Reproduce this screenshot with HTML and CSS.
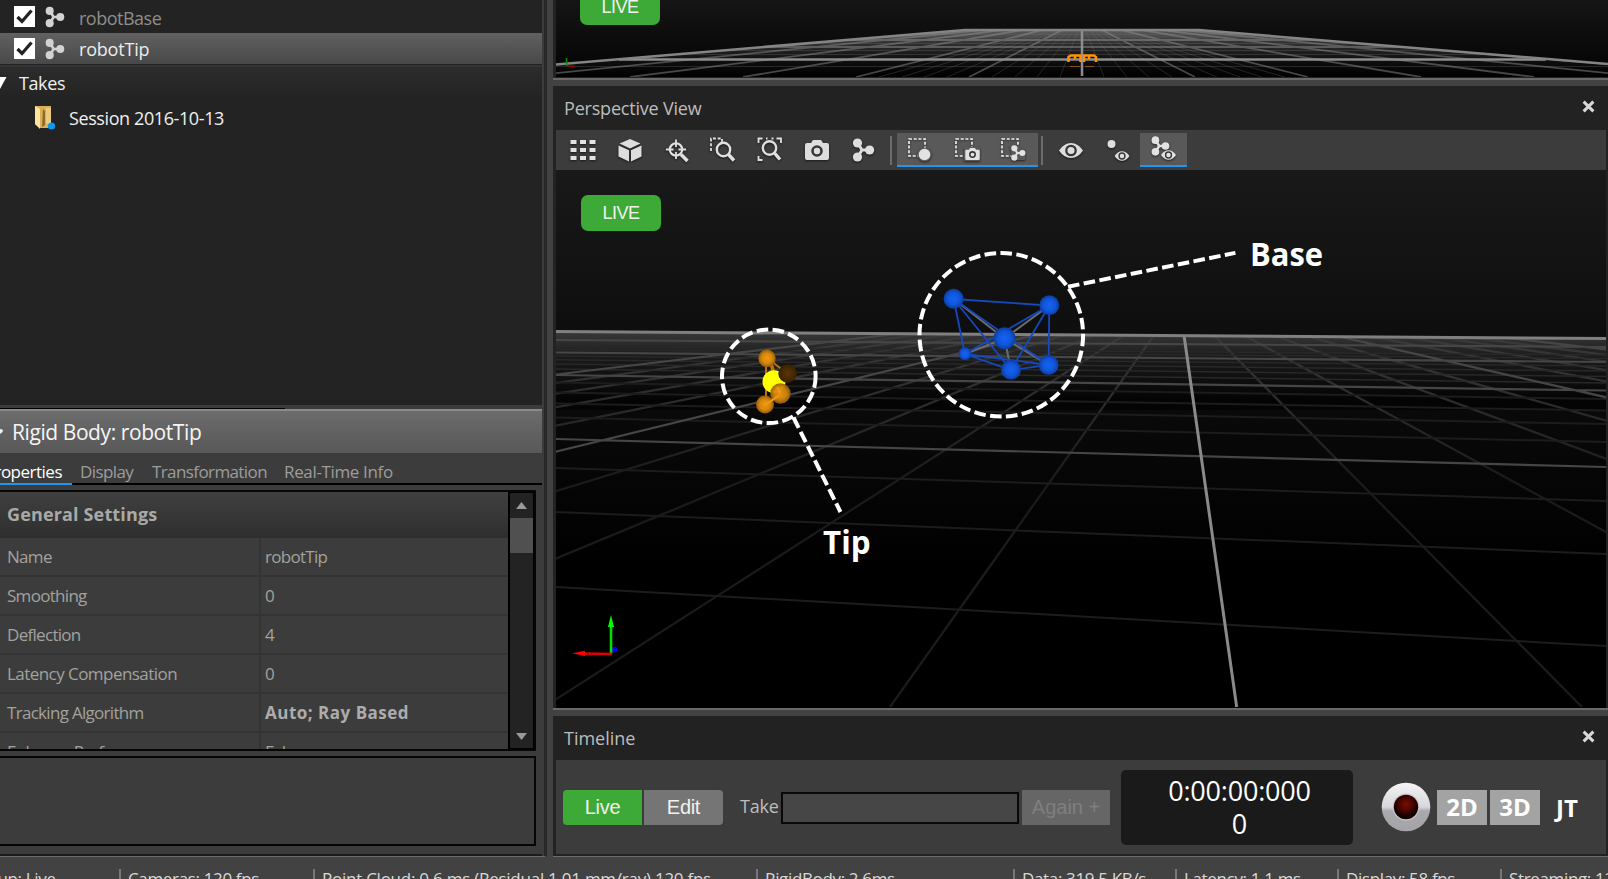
FILE: index.html
```html
<!DOCTYPE html>
<html lang="en">
<head>
<meta charset="utf-8">
<title>Motion Capture</title>
<link rel="stylesheet" href="styles.css">
</head>
<body>
<svg class="defs" width="0" height="0" aria-hidden="true">
  <defs>
    <symbol id="bones" viewBox="0 0 24 24">
      <path d="M7 5.500L11 12M7 18.500L11 12M11 12H18" stroke="currentColor" stroke-width="3" fill="none"/>
      <circle cx="6.500" cy="5" r="4.600" fill="currentColor"/><circle cx="6.500" cy="19" r="4.600" fill="currentColor"/><circle cx="18.600" cy="12" r="4.600" fill="currentColor"/>
    </symbol>
    <symbol id="eye" viewBox="0 0 24 16">
      <path d="M0 8Q5 .5 12 .5T24 8Q19 15.500 12 15.500T0 8Z" fill="currentColor"/>
      <circle cx="12" cy="8" r="4.700" fill="none" stroke="#383838" stroke-width="2.300"/>
    </symbol>
    <symbol id="camera" viewBox="0 0 24 20">
      <path d="M2 3H6L8 0H16L18 3H22Q24 3 24 5V18Q24 20 22 20H2Q0 20 0 18V5Q0 3 2 3Z" fill="currentColor"/>
      <circle cx="12" cy="11" r="4.500" fill="none" stroke="#383838" stroke-width="2.600"/>
    </symbol>
    <symbol id="close" viewBox="0 0 12 12"><path d="M1.500 1.500L10.500 10.500M10.500 1.500L1.500 10.500" stroke="currentColor" stroke-width="2.800" fill="none"/></symbol>
    <symbol id="check" viewBox="0 0 21 21"><path d="M3.500 11L8 15.500L17.500 4.500" stroke="#222" stroke-width="3.200" fill="none"/></symbol>
  </defs>
</svg>

<div class="app">
  <div class="main">
    <aside class="side">
      <section class="assets">
        <div class="asset asset-first"><span class="box"><svg width="21" height="21"><use href="#check"/></svg></span><svg class="bone" width="21" height="22"><use href="#bones"/></svg><span class="asset-name t-base">robotBase</span></div>
        <div class="asset asset-on"><span class="box"><svg width="21" height="21"><use href="#check"/></svg></span><svg class="bone" width="21" height="22"><use href="#bones"/></svg><span class="asset-name t-tip">robotTip</span></div>
        <div class="takes"><svg width="7" height="12"><path d="M0 0H6.500L0 12Z" fill="#fff"/></svg><span class="t-takes">Takes</span></div>
        <div class="session">
          <svg width="21" height="25" viewBox="0 0 21 25"><path d="M0 1H16V19L13 20V23H5L0 19Z" fill="#d9b057"/><path d="M0 1L5 4V24L0 19Z" fill="#ffe39b"/><path d="M8 4L10 6V20L7 22Z" fill="#8c6a2c"/><path d="M11 3H16V18L11 19Z" fill="#edcb7d"/><circle cx="16.500" cy="21" r="3.600" fill="#0a9cf5"/></svg>
          <span class="t-session">Session 2016-10-13</span>
        </div>
      </section>
      <section class="props">
        <i class="rule"></i>
        <h2 class="props-title"><svg width="5" height="8"><path d="M0 1Q4 1 2.500 4L0 6Z" fill="#eee"/></svg><span class="t-rigid">Rigid Body: robotTip</span></h2>
        <nav class="tabs"><span class="tab tab-on"><span class="t-prop">Properties</span></span><span class="tab t-disp">Display</span><span class="tab t-trans">Transformation</span><span class="tab t-real">Real-Time Info</span></nav>
        <div class="grid">
          <div class="grid-rows">
            <h3 class="group"><span class="t-gen">General Settings</span></h3>
            <div class="row"><span class="key">Name</span><span class="val">robotTip</span></div>
            <div class="row"><span class="key">Smoothing</span><span class="val">0</span></div>
            <div class="row"><span class="key">Deflection</span><span class="val">4</span></div>
            <div class="row"><span class="key key-wide">Latency Compensation</span><span class="val">0</span></div>
            <div class="row"><span class="key">Tracking Algorithm</span><span class="val strong">Auto; Ray Based</span></div>
            <div class="row"><span class="key">Enhance Performance</span><span class="val">False</span></div>
          </div>
          <div class="scroll"><svg width="11" height="7"><path d="M0 7L5.500 0L11 7Z" fill="#9a9a9a"/></svg><i class="thumb"></i><svg class="down" width="11" height="7"><path d="M0 0L5.500 7L11 0Z" fill="#9a9a9a"/></svg></div>
        </div>
        <div class="help"></div>
      </section>
    </aside>

    <div class="work">
      <section class="view view-top">
        <svg class="scene" width="1052" height="77" viewBox="556 0 1052 77">
          <defs>
            <linearGradient id="sky1" x1="0" y1="0" x2="0" y2="1"><stop offset="0" stop-color="#151515"/><stop offset=".9" stop-color="#050505"/></linearGradient>
            <linearGradient id="floor1" gradientUnits="userSpaceOnUse" x1="0" y1="30" x2="0" y2="77"><stop offset="0" stop-color="#5c5c5c"/><stop offset=".28" stop-color="#303030"/><stop offset=".6" stop-color="#111"/><stop offset="1" stop-color="#000"/></linearGradient>
            <clipPath id="f1"><path d="M965 30H1199L1608 64.500V77H556V65Z"/></clipPath>
          </defs>
          <rect x="556" width="1052" height="77" fill="url(#sky1)"/>
          <g clip-path="url(#f1)" fill="none">
            <rect x="556" y="30" width="1052" height="47" fill="url(#floor1)"/>
            <path stroke="#777" stroke-opacity=".28" d="M1082 20L1104 77M1082 20L1127 77M1082 20L1149 77M1082 20L1172 77M1082 20L1217 77M1082 20L1240 77M1082 20L1262 77M1082 20L1285 77M1082 20L1060 77M1082 20L1037 77M1082 20L1015 77M1082 20L992 77M1082 20L947 77M1082 20L924 77M1082 20L902 77M1082 20L879 77M556 34.500H1608M556 37H1608M556 43.500H1608M556 50.500H1608M556 54.500H1608M556 66.500H1608"/>
            <path stroke="#999" stroke-opacity=".45" stroke-width="1.800" d="M1082 20L1195 77M1082 20L1308 77M1082 20L1421 77M1082 20L1534 77M1082 20L1647 77M1082 20L1760 77M1082 20L1873 77M1082 20L969 77M1082 20L856 77M1082 20L743 77M1082 20L630 77M1082 20L517 77M1082 20L404 77M1082 20L291 77M556 40H1608M556 47H1608"/>
            <path stroke="#8e8e8e" stroke-width="2.500" d="M619 59.500H1546M1082 30V76"/>
          </g>
          <path d="M556 64.500L965 30H1199L1608 64" stroke="#858585" stroke-width="2.500" fill="none"/>
          <path d="M566.500 58V66" stroke="#0a8a0a" stroke-width="1.500"/><path d="M567 66H575" stroke="#900" stroke-width="1.500"/>
          <path d="M1068.500 62V57L1071 55.500H1080.500V62M1084 62V55.500H1094L1096 57V62M1075 56V59M1089 56V59" stroke="#ff9200" stroke-width="2.500" fill="none"/>
          <path d="M1070 66.500H1080M1085 66.500H1094" stroke="#8a5510" stroke-width="1.200"/>
        </svg>
        <span class="live live-top">LIVE</span>
      </section>

      <section class="view view-main">
        <header class="bar"><span class="t-persp">Perspective View</span><svg width="13" height="13"><use href="#close"/></svg></header>
        <div class="tools">
          <svg class="ico" viewBox="0 0 26 26"><path d="M.5 3h6v4h-6zM10 3h6v4h-6zM19.500 3h6v4h-6zM.5 11h6v4h-6zM10 11h6v4h-6zM19.500 11h6v4h-6zM.5 19h6v4h-6zM10 19h6v4h-6zM19.500 19h6v4h-6z" fill="#e2e2e2"/></svg>
          <svg class="ico" viewBox="0 0 26 26"><path d="M13 2L23.500 6.500L13 11.500L2.500 6.500ZM1.500 8.500L12 13.300V24.500L1.500 19.500ZM24.500 8.500L14 13.300V24.500L24.500 19.500Z" fill="#dedede"/></svg>
          <svg class="ico" viewBox="0 0 26 26" fill="none" stroke="#e0e0e0"><circle cx="12" cy="12.500" r="6.200" stroke-width="2.200"/><path d="M12 2.500V10M12 15V22M2 12.500H9.500M14.500 12.500H22" stroke-width="1.800"/><path d="M17 17.500L23.500 24" stroke-width="3.600"/></svg>
          <svg class="ico" viewBox="0 0 26 26" fill="none" stroke="#e0e0e0"><circle cx="13.500" cy="12.500" r="6.700" stroke-width="2.400"/><path d="M18.500 17.500L24 23.500" stroke-width="3.400"/><path d="M1 14V1.500H12V5" stroke-width="1.800" stroke-dasharray="3 1.800"/></svg>
          <svg class="ico" viewBox="0 0 26 26" fill="none" stroke="#e0e0e0"><circle cx="12.500" cy="11" r="6.700" stroke-width="2.400"/><path d="M17.500 16L23 22.500" stroke-width="3.400"/><path d="M1.500 6V1.500H5.500M19.500 1.500H24V6M1.500 19V23H5.500M9 1.500H10.500M14.500 1.500H16.500" stroke-width="1.800"/></svg>
          <svg class="ico" viewBox="0 0 26 26" color="#dedede"><use href="#camera" x="1" y="3" width="24" height="20"/></svg>
          <svg class="ico" viewBox="0 0 26 26" color="#dedede"><use href="#bones" x="0" y="1" width="24" height="24"/></svg>
          <i class="sep"></i>
          <div class="group-on">
            <svg class="ico" viewBox="0 0 26 26" color="#e2e2e2"><path d="M2 3H18V20H2Z" fill="none" stroke="#eee" stroke-width="1.700" stroke-dasharray="3 1.700"/><circle cx="17.500" cy="18.500" r="7" fill="#595959"/><circle cx="17.500" cy="18.500" r="5.800" fill="currentColor"/></svg>
            <svg class="ico" viewBox="0 0 26 26" color="#e2e2e2"><path d="M2 3H18V20H2Z" fill="none" stroke="#eee" stroke-width="1.700" stroke-dasharray="3 1.700"/><rect x="10" y="11" width="16" height="14" fill="#595959"/><use href="#camera" x="11" y="12" width="15" height="12"/></svg>
            <svg class="ico" viewBox="0 0 26 26" color="#e2e2e2"><path d="M2 3H18V20H2Z" fill="none" stroke="#eee" stroke-width="1.700" stroke-dasharray="3 1.700"/><path d="M10 9H16L25 14V24H12Z" fill="#595959"/><use href="#bones" x="10" y="9" width="16" height="16"/></svg>
          </div>
          <i class="sep"></i>
          <svg class="ico ico-eye" viewBox="0 0 26 26" color="#dedede"><use href="#eye" x="1" y="5" width="24" height="17"/></svg>
          <svg class="ico" viewBox="0 0 26 26" color="#dedede"><circle cx="6.500" cy="7" r="4" fill="currentColor"/><use href="#eye" x="9.500" y="14" width="15" height="10"/></svg>
          <div class="group-on one"><svg class="ico" viewBox="0 0 26 26" color="#e2e2e2"><use href="#bones" x="0" y="0" width="20" height="20"/><use href="#eye" x="11" y="14" width="15" height="10"/></svg></div>
        </div>
        <div class="canvas">
          <svg class="scene" width="1050" height="538" viewBox="556 170 1050 538">
            <defs>
              <linearGradient id="sky2" x1="0" y1="0" x2="0" y2="1"><stop offset="0" stop-color="#191919"/><stop offset=".3" stop-color="#0e0e0e"/><stop offset=".75" stop-color="#000"/></linearGradient>
              <linearGradient id="floor2" gradientUnits="userSpaceOnUse" x1="0" y1="334" x2="0" y2="400"><stop offset="0" stop-color="#363636"/><stop offset=".35" stop-color="#1a1a1a"/><stop offset="1" stop-color="#040404"/></linearGradient>
              <linearGradient id="ray" gradientUnits="userSpaceOnUse" x1="0" y1="335" x2="0" y2="480"><stop offset="0" stop-color="#3a3a3a"/><stop offset="1" stop-color="#1b1b1b"/></linearGradient>
              <clipPath id="f2"><path d="M556 331L1606 338V708H556Z"/></clipPath>
              <radialGradient id="blue"><stop offset="0" stop-color="#1463f5"/><stop offset=".6" stop-color="#1156db"/><stop offset="1" stop-color="#0c3d9c"/></radialGradient>
              <radialGradient id="orange"><stop offset="0" stop-color="#f29a0d"/><stop offset=".6" stop-color="#d4860e"/><stop offset="1" stop-color="#965c06"/></radialGradient>
              <radialGradient id="brown"><stop offset="0" stop-color="#5c3803"/><stop offset="1" stop-color="#382100"/></radialGradient>
            </defs>
            <rect x="556" y="170" width="1050" height="538" fill="url(#sky2)"/>
            <g clip-path="url(#f2)" fill="none">
              <path d="M556 331L1606 338V410H556Z" fill="url(#floor2)"/>
              <path stroke="url(#ray)" stroke-width="2.200" d="M1179 300L1582 707M1179 300L1928 707M1179 300L2274 707M1179 300L2620 707M1179 300L3312 707M1179 300L3658 707M1179 300L4004 707M1179 300L4350 707M1179 300L890 707M1179 300L544 707M1179 300L198 707M1179 300L-148 707M1179 300L-840 707M1179 300L-1186 707M1179 300L-1532 707M1179 300L-1878 707"/>
              <path stroke="#1c1c1c" stroke-width="2" d="M556 587L1606 646M556 512L1606 554M556 468L1606 501M556 417.500L1606 442M556 403.500L1606 424M556 392.500L1606 410.500M556 382.500L1606 399"/>
              <path stroke="#282828" stroke-width="1.500" d="M556 369L1606 383M556 364L1606 376.500M556 359.700L1606 371M556 356L1606 366M556 349.500L1606 358.500M556 346.800L1606 355"/>
              <path stroke="#464646" stroke-width="2.200" d="M556 439L1606 467M556 375L1606 390.500M556 352.500L1606 362M556 340L1606 347M1179 300L2966 707M1179 300L4696 707M1179 300L-494 707M1179 300L-2224 707"/>
              <path stroke="#8a8a8a" stroke-width="3" d="M1179 300L1236.700 707"/>
            </g>
            <path d="M556 331.500L1606 338.500" stroke="#808080" stroke-width="3"/>

            <g stroke="#6c6c6c" stroke-width="2"><path d="M1004.500 338.500L953.600 299M1004.500 338.500L1049.300 305.500M1004.500 338.500L965 354M1004.500 338.500L1011 370M1004.500 338.500L1048.600 365"/></g>
            <path fill="none" stroke="#1549bd" stroke-width="1.800" d="M953.600 299L1049.300 305.500L1048.600 365L1011 370L965 354ZM953.600 299L1011 370L1049.300 305.500L965 354L1048.600 365L953.600 299"/>
            <g fill="url(#blue)"><circle cx="953.600" cy="298.700" r="10"/><circle cx="1049.300" cy="305.300" r="10"/><circle cx="965" cy="353.700" r="6.500"/><circle cx="1048.600" cy="365" r="10"/><circle cx="1011" cy="369.700" r="10"/><circle cx="1004.500" cy="338.300" r="11"/></g>

            <path fill="none" stroke="#b87212" stroke-width="2" d="M766 358V404M769 358L775 382M767 358L788 374M771 360L780 393M765 404L780 393"/>
            <circle cx="767" cy="358.300" r="8.700" fill="url(#orange)"/><circle cx="774" cy="381.700" r="11.500" fill="#ff0"/><circle cx="787.600" cy="373.500" r="9.300" fill="url(#brown)"/><circle cx="765" cy="404.500" r="9" fill="url(#orange)"/><circle cx="780.400" cy="393.500" r="10.200" fill="url(#orange)" fill-opacity=".94"/>
            <path d="M766 404L779 396M780 393L777 387" stroke="#f59b16" stroke-width="1.500"/>

            <g fill="none" stroke="#fff" stroke-width="4" stroke-dasharray="11.600 4.400">
              <circle cx="768.800" cy="376.300" r="46.800"/><circle cx="1001.300" cy="334.800" r="81.800"/>
              <path d="M793.500 417.500L840.500 512M1068 286.700L1235.400 252.900"/>
            </g>
            <text class="label" x="1250" y="265.500" textLength="73" lengthAdjust="spacingAndGlyphs">Base</text>
            <text class="label" x="823" y="554" textLength="47.500" lengthAdjust="spacingAndGlyphs">Tip</text>

            <circle cx="614.500" cy="649.500" r="2.800" fill="#00f"/>
            <path d="M611 654V624" stroke="#00e000" stroke-width="2.600"/><path d="M608 627L611 615L614 627Z" fill="#0f0"/>
            <path d="M612 654L583 653.500" stroke="#e00000" stroke-width="2.400"/><path d="M585 650.800L572 653.300L585 656Z" fill="#f00"/>
          </svg>
          <span class="live live-main">LIVE</span>
        </div>
      </section>

      <section class="timeline">
        <header class="bar"><span class="t-time">Timeline</span><svg width="13" height="13"><use href="#close"/></svg></header>
        <div class="controls">
          <div class="modes"><button class="mode mode-live">Live</button><button class="mode">Edit</button></div>
          <span class="take">Take</span><span class="field"></span><button class="again">Again +</button>
          <div class="clock"><span class="t-clock">0:00:00:000</span><span>0</span></div>
          <svg class="rec" width="50" height="50" viewBox="0 0 50 50">
            <defs><linearGradient id="ring" x1="0" y1="0" x2="0" y2="1"><stop offset="0" stop-color="#f4f4f6"/><stop offset=".5" stop-color="#d8d8dc"/><stop offset=".58" stop-color="#a9a9ae"/><stop offset="1" stop-color="#a3a3a8"/></linearGradient><radialGradient id="dot" cx=".5" cy=".4"><stop offset="0" stop-color="#7c0d02"/><stop offset=".55" stop-color="#4a0500"/><stop offset="1" stop-color="#120000"/></radialGradient></defs>
            <circle cx="25" cy="25" r="24.300" fill="url(#ring)"/><circle cx="25" cy="25" r="13.500" fill="#c9c9cc"/><circle cx="25" cy="25" r="12.200" fill="url(#dot)"/>
          </svg>
          <span class="dim">2D</span><span class="dim">3D</span><span class="jt">JT</span>
        </div>
      </section>
    </div>
  </div>

  <footer class="status">
    <span class="st s0">Group: Live</span><span class="st s1">Cameras: 120 fps</span><span class="st s2">Point Cloud: 0.6 ms (Residual 1.01 mm/ray) 120 fps</span><span class="st s3">RigidBody: 2.6ms</span><span class="st s4">Data: 319.5 KB/s</span><span class="st s5">Latency: 1.1 ms</span><span class="st s6">Display: 58 fps</span><span class="st s7">Streaming: 120</span>
  </footer>
</div>
</body>
</html>
```
FILE: styles.css
```css
* { box-sizing: border-box; }
body { margin: 0; overflow: hidden; background: #424242; font-family: "Open Sans", "Noto Sans", sans-serif; font-size: 17px; color: #bdbdbd; }
h2, h3 { margin: 0; font-weight: 400; }
button { border: 0; padding: 0; font: inherit; }
svg { display: block; flex: none; }
.defs { position: absolute; }
.app { width: 1608px; height: 879px; display: flex; flex-direction: column; overflow: hidden; white-space: nowrap; }
.main { display: flex; height: 857px; gap: 6px; }

.side { width: 547px; background: #3c3c3c; border-right: 3px solid #292929; border-bottom: 1px solid #6d6d6d; display: flex; flex-direction: column; }
.assets { width: 542px; height: 405px; background: #232323; }
.asset { display: flex; align-items: center; height: 33px; padding-left: 14px; color: #8e8e8a; font-size: 18px; }
.box { width: 21px; height: 21px; background: #fff; }
.bone { margin: 0 14px 0 9px; color: #d2d2d2; }
.asset-first .asset-name { padding-top: 2px; }
.asset-on { height: 31px; background: linear-gradient(#616161, #484848); color: #ececec; }
.t-base { letter-spacing: -.5px; }
.t-tip { letter-spacing: -.2px; padding-top: 1px; }
.takes { display: flex; align-items: center; gap: 12px; height: 34px; margin-top: 1px; border-top: 2px solid #353535; background: linear-gradient(#2c2c2c, #232323); color: #f0f0f0; font-size: 18px; }
.t-takes { letter-spacing: -.4px; }
.session { display: flex; align-items: center; gap: 13px; margin-top: 2px; padding: 0 0 0 35px; height: 32px; color: #f0f0f0; font-size: 18px; }
.t-session { letter-spacing: -.4px; padding-top: 2px; }

.props { width: 542px; flex: 1; border-bottom: 2px solid #1c1c1c; }
.rule { display: block; width: 285px; height: 4px; border-bottom: 1px solid #000; }
.props-title { display: flex; align-items: center; gap: 7px; height: 44px; border-top: 2px solid #8a8a8a; background: linear-gradient(#6c6c6c, #585858); color: #f5f5f5; font-size: 21px; }
.t-rigid { letter-spacing: -.42px; }
.tabs { display: flex; height: 32px; border-bottom: 2px solid #000; color: #9c9c9c; }
.tab { height: 32px; line-height: 37px; }
.tab-on { width: 72px; display: flex; justify-content: flex-end; padding-right: 10px; margin-right: 8px; border-bottom: 2px solid #1f97ee; color: #fff; }
.t-prop { letter-spacing: -.5px; }
.t-disp, .t-trans { letter-spacing: -.6px; }
.t-real { letter-spacing: -.35px; }
.t-disp { width: 72px; }
.t-trans { width: 132px; }
.grid { display: flex; width: 536px; height: 261px; margin-top: 5px; border: solid #060606; border-width: 2px 2px 2px 0; overflow: hidden; }
.grid-rows { width: 508px; }
.group { height: 46px; padding-left: 7px; line-height: 44px; background: linear-gradient(#404040, #2e2e2e); font-size: 18px; font-weight: 700; color: #a9aaa8; }
.t-gen { letter-spacing: .15px; }
.row { display: flex; height: 39px; line-height: 38px; border-bottom: 2px solid #343434; color: #a2a29e; letter-spacing: -.7px; }
.key { width: 261px; padding-left: 7px; border-right: 2px solid #343434; }
.key-wide { letter-spacing: -.55px; }
.val { padding-left: 4px; }
.strong { font-weight: 700; letter-spacing: .5px; color: #acacac; }
.scroll { width: 26px; border: solid #000; border-width: 1px 1px 1px 2px; background: #232323; display: flex; flex-direction: column; align-items: center; padding: 9px 0 8px; }
.thumb { width: 23px; height: 35px; margin-top: 9px; background: #505050; }
.down { margin-top: auto; }
.help { width: 536px; height: 90px; margin-top: 5px; border: 2px solid #060606; border-left: 0; }

.work { width: 1055px; display: flex; flex-direction: column; gap: 6px; }
.view { position: relative; }
.view-top { height: 80px; padding-left: 3px; background: #222; border-bottom: 2px solid #6a6a6a; }
.live { position: absolute; width: 80px; height: 36px; border-radius: 7px; background: #3da936; color: #f2f2f2; font: 18px/37px "Liberation Sans", Arial, sans-serif; letter-spacing: -.5px; text-align: center; }
.live-top { left: 27px; top: -11px; }
.live-main { left: 25px; top: 25px; }
.view-main { height: 624px; padding-left: 3px; background: #222; border-bottom: 2px solid #6a6a6a; }
.bar { display: flex; justify-content: space-between; align-items: center; height: 44px; padding: 0 13px 1px 8px; font-size: 18px; color: #bdbdbd; }
.bar svg { color: #d8d8d8; margin-bottom: 2px; }
.t-persp { letter-spacing: -.2px; }
.t-time { letter-spacing: 0; }
.tools { display: flex; align-items: center; width: 1050px; height: 40px; padding-left: 14px; background: #3c3c3c; }
.ico { width: 26px; height: 26px; margin-right: 20.8px; margin-bottom: 1px; flex: none; filter: drop-shadow(0 1px 1px #0009); }
.tools > .ico:nth-child(7) { margin-right: 13px; }
.sep { width: 2px; height: 29px; flex: none; background: #6c6c6c; }
.group-on { display: flex; align-items: center; width: 141px; height: 34px; flex: none; margin: 0 3px 0 5px; padding-left: 10px; border-bottom: 2px solid #1f97ee; background: #595959; }
.ico-eye { margin-left: 15px; }
.one { width: 47px; margin-left: -11px; }
.canvas { position: relative; width: 1050px; height: 538px; }
.label { fill: #fff; font: 700 33px "Open Sans", sans-serif; }

.timeline { height: 141px; padding-left: 3px; background: #222; border-bottom: 1px solid #6d6d6d; }
.controls { display: flex; align-items: center; width: 1050px; height: 94px; padding-left: 7px; background: #3c3c3c; }
.modes { display: flex; gap: 2px; margin-right: 17px; }
.mode { width: 79px; height: 35px; background: #757575; color: #f2f2f2; font: 20px/35px "Liberation Sans", Arial, sans-serif; letter-spacing: -.3px; border-radius: 0 4px 4px 0; }
.mode-live { background: #3da936; border-radius: 4px 0 0 4px; }
.take { width: 41px; padding-bottom: 2px; font-size: 18px; letter-spacing: -.2px; }
.field { width: 238px; height: 32px; margin-top: 2px; border: 2px solid #080808; background: #464646; }
.again { width: 88px; height: 35px; margin: 0 11px 0 3px; background: #666; color: #7f7f7f; font: 20px/35px "Liberation Sans", Arial, sans-serif; }
.clock { width: 232px; height: 75px; border-radius: 5px; background: #1a1a1a; color: #fff; display: flex; flex-direction: column; align-items: center; padding: 4px 0 0 5px; font-size: 27px; line-height: 33px; }
.t-clock { letter-spacing: -.2px; }
.rec { margin: 0 6px 0 28px; }
.dim { width: 50px; height: 35px; margin: 1px 3px 0 0; background: #a3a3a3; color: #fff; font-weight: 700; font-size: 24px; line-height: 34px; text-align: center; }
.jt { margin-left: 13px; color: #fff; font-size: 24px; font-weight: 700; }

.status { display: flex; height: 22px; padding-top: 12px; overflow: hidden; color: #d8d8d8; letter-spacing: -.35px; line-height: 20px; }
.st { height: 20px; padding-left: 7px; border-left: 2px solid #777; overflow: hidden; flex: none; }
.s0 { width: 119px; border: 0; padding: 0; text-indent: -31px; }
.s1 { width: 194px; }
.s2 { width: 443px; letter-spacing: -.25px; }
.s3 { width: 257px; }
.s4 { width: 162px; }
.s5 { width: 162px; }
.s6 { width: 163px; }
.s7 { width: 108px; }
```
